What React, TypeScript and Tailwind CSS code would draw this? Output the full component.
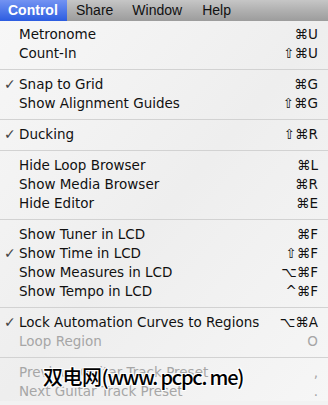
import React from "react";

type Item =
  | { sep: true }
  | { label: string; sc: string; check?: boolean; disabled?: boolean; sep?: false };

const items: Item[] = [
  { label: "Metronome", sc: "⌘U" },
  { label: "Count-In", sc: "⇧⌘U" },
  { sep: true },
  { label: "Snap to Grid", sc: "⌘G", check: true },
  { label: "Show Alignment Guides", sc: "⇧⌘G" },
  { sep: true },
  { label: "Ducking", sc: "⇧⌘R", check: true },
  { sep: true },
  { label: "Hide Loop Browser", sc: "⌘L" },
  { label: "Show Media Browser", sc: "⌘R" },
  { label: "Hide Editor", sc: "⌘E" },
  { sep: true },
  { label: "Show Tuner in LCD", sc: "⌘F" },
  { label: "Show Time in LCD", sc: "⇧⌘F", check: true },
  { label: "Show Measures in LCD", sc: "⌥⌘F" },
  { label: "Show Tempo in LCD", sc: "^⌘F" },
  { sep: true },
  { label: "Lock Automation Curves to Regions", sc: "⌥⌘A", check: true },
  { label: "Loop Region", sc: "O", disabled: true },
  { sep: true },
  { label: "Previous Guitar Track Preset", sc: ",", disabled: true },
  { label: "Next Guitar Track Preset", sc: ".", disabled: true },
];

export default function App() {
  return (
    <div
      className="relative w-[328px] h-[405px] overflow-hidden bg-[#f2f2f2]"
      style={{ fontFamily: '"DejaVu Sans", sans-serif' }}
    >
      <div
        className="flex h-[21px] items-center bg-gradient-to-b from-[#c6c6c6] via-[#b0b0b0] to-[#9c9c9c] text-[14px] text-[#111]"
        style={{ fontFamily: '"Liberation Sans", Arial, sans-serif' }}
      >
        <div className="flex h-full w-[67px] items-center bg-gradient-to-b from-[#7393f2] to-[#2c5ce0] pl-[8px] font-bold text-white">
          Control
        </div>
        <div className="ml-[9px]">Share</div>
        <div className="ml-[19px]">Window</div>
        <div className="ml-[20px]">Help</div>
      </div>
      <div className="flex flex-col pt-[4px] bg-gradient-to-br from-[#f7f7f7] via-[#eeeeee] to-[#f6f6f6]">
        {items.map((it, i) =>
          it.sep ? (
            <div key={i} className="flex h-[12px] items-center">
              <div className="h-px w-full bg-[#d2d2d2]" />
            </div>
          ) : (
            <div
              key={i}
              className={`flex h-[19px] items-center text-[13.5px] ${
                it.disabled ? "text-[#a6a6a6]" : "text-[#111]"
              }`}
            >
              <div className="w-[19px] pl-[4px] text-[14px] text-[#444]">
                {it.check ? "✓" : ""}
              </div>
              <div className="flex-1 whitespace-nowrap">{it.label}</div>
              <div className="pr-[10px] whitespace-nowrap">{it.sc}</div>
            </div>
          )
        )}
      </div>
      <div
        className="absolute left-[43px] top-[362px] whitespace-nowrap text-[20px] font-medium tracking-[-0.5px] text-black"
        style={{
          fontFamily: '"Noto Sans CJK SC", sans-serif',
          textShadow:
            "1px 0 0 #fff, -1px 0 0 #fff, 0 1px 0 #fff, 0 -1px 0 #fff, 1px 1px 0 #fff, -1px -1px 0 #fff, 1px -1px 0 #fff, -1px 1px 0 #fff",
        }}
      >
        双电网<span className="tracking-[-1.2px]">(www. pcpc. me)</span>
      </div>
    </div>
  );
}
